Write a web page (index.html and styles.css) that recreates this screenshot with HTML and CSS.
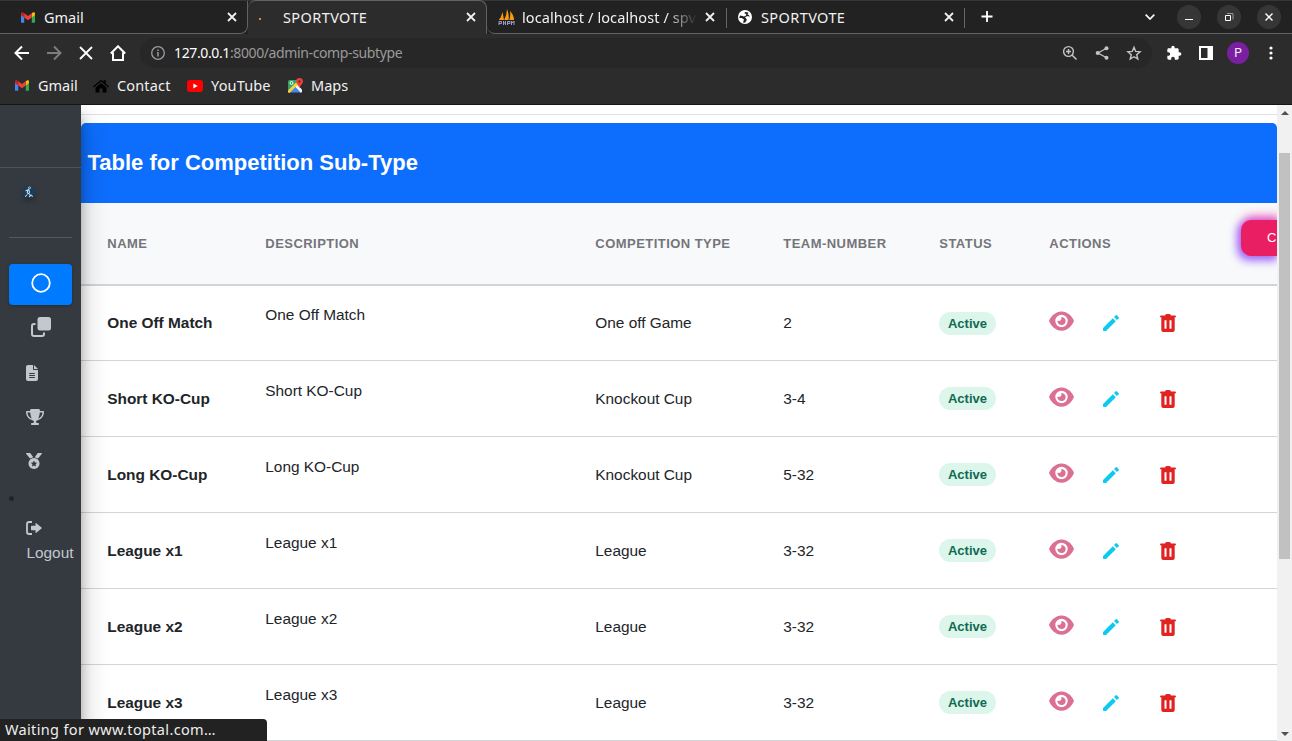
FILE: index.html
```html
<!DOCTYPE html>
<html lang="en">
<head>
<meta charset="utf-8">
<title>SPORTVOTE</title>
<link rel="stylesheet" href="styles.css">
</head>
<body>
<svg class="defs" aria-hidden="true">
  <symbol id="gmail" viewBox="0 0 16 12"><path fill="#4285f4" d="M0 2v9q0 1 1 1h2.700V5z"/><path fill="#34a853" d="M12.300 5v7H15q1 0 1-1V2z"/><path fill="#fbbc04" d="M12.300 1.200V6L16 3.200V1.700C16 0 14.400 -.4 13.200 .5z"/><path fill="#c5221f" d="M0 1.700v1.500L3.700 6V1.200L2.800.5C1.600-.4 0 0 0 1.700z"/><path fill="#ea4335" d="M3.700 6V1.200L8 4.400l4.300-3.200V6L8 9.200z"/></symbol>
  <symbol id="close" viewBox="0 0 10 10"><path d="M1 1l8 8M9 1l-8 8" stroke="currentColor" stroke-width="1.800" fill="none"/></symbol>
  <symbol id="eye" viewBox="0 0 576 512"><path fill="currentColor" d="M288 32c-80.800 0-145.500 36.800-192.600 80.600C48.600 156 17.300 208 2.500 243.700c-3.300 7.900-3.300 16.700 0 24.600C17.300 304 48.600 356 95.400 399.400C142.500 443.200 207.200 480 288 480s145.500-36.800 192.600-80.600c46.800-43.500 78.100-95.400 93-131.100c3.300-7.900 3.300-16.700 0-24.600c-14.900-35.700-46.200-87.700-93-131.100C433.500 68.800 368.800 32 288 32zM144 256a144 144 0 1 1 288 0 144 144 0 1 1 -288 0zm144-64c0 35.300-28.700 64-64 64c-7.100 0-13.900-1.200-20.300-3.300c-5.500-1.800-11.900 1.600-11.700 7.400c.3 6.900 1.300 13.800 3.200 20.700c13.700 51.200 66.400 81.600 117.600 67.900s81.600-66.400 67.900-117.600c-11.100-41.500-47.800-69.400-88.600-71.100c-5.800-.2-9.200 6.100-7.400 11.700c2.100 6.400 3.300 13.200 3.300 20.300z"/></symbol>
  <symbol id="pencil" viewBox="0 0 16 16"><path fill="currentColor" d="M9.800 3.200l3 3-9.300 9.300q-.5.500-1.200.5H.7q-.7 0-.7-.7v-1.600q0-.7.500-1.200zM11 2l1.500-1.500q.8-.8 1.600 0l1.400 1.400q.8.800 0 1.600L14 5z"/></symbol>
  <symbol id="trash" viewBox="0 0 16 18"><path fill="currentColor" fill-rule="evenodd" d="M5 1.500Q5.200 0 6.500 0h3Q10.800 0 11 1.500h4q1 0 1 .9t-1 .9h-.3V16q0 2-2 2H3.300q-2 0-2-2V3.300H1q-1 0-1-.9t1-.9zM4.500 6.300v8.400h2V6.300zm5 0v8.400h2V6.300z"/></symbol>
</svg>

<div class="browser">
  <header class="tabs">
    <div class="tab tab-gmail"><svg class="gicon"><use href="#gmail"/></svg><span>Gmail</span><svg class="x"><use href="#close"/></svg></div>
    <div class="tab tab-active"><i class="spinner"></i><span>SPORTVOTE</span><svg class="x"><use href="#close"/></svg></div>
    <div class="tab tab-db">
      <svg class="sail" viewBox="0 0 17 17"><path fill="#f89c0e" d="M4.500 3L6 11H.8Q3.500 8 4.500 3zM9 0q2.500 6 1.500 11H6.200Q8.800 6 9 0zM12 2q4 4 4 9h-4.600Q12.800 6 12 2z"/><path d="M1 16v-3.500h2.500v2H1M5.500 12v4M5.500 14h2M7.500 12v4M9.500 16v-3.500h2.500v2H9.500M13.500 16v-4l1.200 2 1.300-2v4" stroke="#9a9cc8" fill="none"/></svg>
      <span class="fade">localhost / localhost / spv</span><svg class="x"><use href="#close"/></svg></div>
    <div class="tab tab-last">
      <svg class="globe" viewBox="0 0 14 14"><circle cx="7" cy="7" r="7" fill="#fff"/><path fill="#222" d="M7 2l-.5 1.500 1.800.5L8 5.500 6 6.500 4.300 6 2 5.500 1.200 8l2.500 0 2.300 1.500L5 12.600l2 .1 2-3 .5-2 2-.7L11 5l-1.500-.5L10.500 2.500Z"/><path fill="#fff" d="M7 7l3-1 2.500 1.500-1 2-2.500.5z"/></svg>
      <span>SPORTVOTE</span><svg class="x"><use href="#close"/></svg></div>
    <svg class="plus" viewBox="0 0 12 12"><path d="M6 0v12M0 6h12" stroke="#fff" stroke-width="2"/></svg>
    <div class="window-tools">
      <svg class="chev" viewBox="0 0 10 6"><path d="M.7.7L5 5 9.300.7" stroke="#fff" stroke-width="1.700" fill="none"/></svg>
      <b><svg viewBox="0 0 10 10"><path d="M1 7.500h8" stroke="#fff"/></svg></b>
      <b><svg viewBox="0 0 10 10"><path d="M3 1.500h6v6" stroke="#999" fill="none"/><path d="M1.500 3.500h5v5h-5z" stroke="#fff" fill="none"/></svg></b>
      <b><svg viewBox="0 0 10 10"><path d="M1.500 1.500l7 7M8.500 1.500l-7 7" stroke="#fff" stroke-width="1.400"/></svg></b>
    </div>
  </header>

  <nav class="toolbar">
    <svg class="nav" viewBox="0 0 16 16"><path d="M15 8H2M8 1.500L1.500 8 8 14.500" stroke="#fff" stroke-width="2" fill="none"/></svg>
    <svg class="nav" viewBox="0 0 16 16"><path d="M1 8h13M8 1.500L14.500 8 8 14.500" stroke="#7d7d7d" stroke-width="2" fill="none"/></svg>
    <svg class="nav" viewBox="0 0 16 16"><path d="M2 2l12 12M14 2L2 14" stroke="#fff" stroke-width="1.800"/></svg>
    <svg class="nav" viewBox="0 0 16 16"><path d="M.8 8.500L8 1.300l7.200 7.200M3 7.500V15h10V7.500" stroke="#fff" stroke-width="2" fill="none"/></svg>
    <div class="omnibox">
      <svg class="info" viewBox="0 0 14 14"><circle cx="7" cy="7" r="6.300" stroke="#9a9da1" stroke-width="1.300" fill="none"/><path d="M7 6v4.500M7 3.500V5" stroke="#9a9da1" stroke-width="1.500"/></svg>
      <p class="url"><em>127.0.0.1</em>:8000/admin-comp-subtype</p>
      <svg class="act" viewBox="0 0 16 16"><circle cx="6.500" cy="6.500" r="4.900" stroke="#c4c4c4" stroke-width="1.400" fill="none"/><path d="M10 10l4.500 4.500M6.500 4v5M4 6.500h5" stroke="#c4c4c4" stroke-width="1.500"/></svg>
      <svg class="act" viewBox="0 0 16 16"><path d="M12.500 3.300L4 8l8.500 4.700" stroke="#c4c4c4" stroke-width="1.300" fill="none"/><g fill="#c4c4c4"><circle cx="12.500" cy="3.300" r="2"/><circle cx="3.700" cy="8" r="2"/><circle cx="12.500" cy="12.700" r="2"/></g></svg>
      <svg class="act" viewBox="0 0 16 16"><path d="M8 2.300l1.700 4.100 4.400.4-3.400 2.900 1.100 4.300L8 11.700 4.200 14l1.100-4.300-3.400-2.900 4.400-.4z" stroke="#c4c4c4" stroke-width="1.400" fill="none"/></svg>
    </div>
    <svg class="tool" viewBox="0 0 24 24"><path fill="#fff" d="M20.500 11H19V7c0-1.100-.9-2-2-2h-4V3.500C13 2.120 11.880 1 10.500 1S8 2.120 8 3.500V5H4c-1.100 0-1.990.9-1.990 2v3.800H3.500c1.490 0 2.700 1.210 2.700 2.700s-1.210 2.700-2.700 2.700H2V20c0 1.100.9 2 2 2h3.800v-1.500c0-1.490 1.210-2.700 2.700-2.700 1.490 0 2.700 1.210 2.700 2.700V22H17c1.100 0 2-.9 2-2v-4h1.500c1.380 0 2.500-1.120 2.500-2.500S21.880 11 20.500 11z"/></svg>
    <svg class="tool" viewBox="0 0 16 16"><path fill="#fff" fill-rule="evenodd" d="M1 1h14v14H1zM3 3v10h6.500V3z"/></svg>
    <span class="avatar">P</span>
    <svg class="dots" viewBox="0 0 4 14"><circle cx="2" cy="2" r="1.600" fill="#fff"/><circle cx="2" cy="7" r="1.600" fill="#fff"/><circle cx="2" cy="12" r="1.600" fill="#fff"/></svg>
  </nav>

  <nav class="bookmarks">
    <a class="bm bm-gmail"><svg class="gicon"><use href="#gmail"/></svg><span>Gmail</span></a>
    <a class="bm bm-contact"><svg viewBox="0 0 16 14"><path d="M0 7.500L8 .8l2.500 2V1.200h2.300v3.600L16 7.500l-.8 1L8 2.600.8 8.500zM2.500 8.500L8 4l5.500 4.500V13.500H9.500v-4h-3v4h-4z"/></svg><span>Contact</span></a>
    <a class="bm bm-youtube"><svg viewBox="0 0 16 12"><rect width="16" height="12" rx="3" fill="red"/><path d="M6.300 3.500v5L10.700 6z" fill="#fff"/></svg><span>YouTube</span></a>
    <a class="bm bm-maps"><svg viewBox="0 0 15 15"><path fill="#34a063" d="M1.500 2H13v5L6 14H1.500Q0 14 0 12.500v-9Q0 2 1.500 2z"/><path fill="#4285f4" d="M1 14.500L7 8.500l6 6z"/><path fill="#f5f5f5" d="M7 8.500l2-2 5 5v2L13 15z"/><path fill="#fdd13a" d="M0 12.500L9.500 3l2 2L1.500 15Q0 15 0 13.500z"/><circle cx="3.500" cy="5" r="1.500" fill="none" stroke="#fff"/><path fill="#e94335" d="M11.500 0Q15 .3 15 3.500c0 2.500-2.700 3.500-3.500 6.500C10.700 7 8 6 8 3.500Q8 .3 11.500 0z"/><circle cx="11.500" cy="3.500" r="1.200" fill="#812a23"/></svg><span>Maps</span></a>
  </nav>
</div>

<div class="page">
  <aside class="sidebar">
    <div class="brand-space"></div>
    <div class="user">
      <svg viewBox="0 0 12 12"><circle cx="6" cy="6" r="6" fill="#123f63"/><circle cx="6.500" cy="1.800" r="1" fill="none" stroke="#d7e2ec" stroke-width=".8"/><path d="M2.500 4.800l3.300-1.300.7 3-2 1.700M5 4L4.200 7l2.600 1 .4 2M2 10.700l2.200-2M6 11l2.500-2 1 1.800" fill="none" stroke="#e7eef4"/></svg>
    </div>
    <a class="side-active"><svg viewBox="0 0 20 20"><circle cx="10" cy="10" r="8.800" fill="none" stroke="#fff" stroke-width="1.800"/></svg></a>
    <svg class="s-copy" viewBox="0 0 20 20"><rect x="6.500" width="13.500" height="13.500" rx="2.500" fill="currentColor"/><path d="M4.500 7H3Q1 7 1 9v8q0 2 2 2h8q2 0 2-2v-1.500" fill="none" stroke="currentColor" stroke-width="2"/></svg>
    <svg class="s-file" viewBox="0 0 384 512"><path fill="currentColor" d="M64 0C28.700 0 0 28.700 0 64V448c0 35.300 28.700 64 64 64H320c35.300 0 64-28.700 64-64V160H256c-17.700 0-32-14.300-32-32V0H64zM256 0V128H384L256 0zM112 256H272c8.800 0 16 7.200 16 16s-7.200 16-16 16H112c-8.800 0-16-7.200-16-16s7.200-16 16-16zm0 64H272c8.800 0 16 7.200 16 16s-7.200 16-16 16H112c-8.800 0-16-7.200-16-16s7.200-16 16-16zm0 64H272c8.800 0 16 7.200 16 16s-7.200 16-16 16H112c-8.800 0-16-7.200-16-16s7.200-16 16-16z"/></svg>
    <svg class="s-trophy" viewBox="0 0 576 512"><path fill="currentColor" d="M400 0H176c-26.500 0-48.100 21.800-47.100 48.200c.2 5.300 .4 10.600 .7 15.800H24C10.700 64 0 74.700 0 88c0 92.600 33.500 157 78.500 200.700c44.300 43.100 98.300 64.800 138.100 75.800c23.400 6.500 39.400 26 39.400 45.600c0 20.900-17 37.900-37.900 37.900H192c-17.700 0-32 14.300-32 32s14.300 32 32 32H384c17.700 0 32-14.300 32-32s-14.300-32-32-32H357.900C337 448 320 431 320 410.100c0-19.600 15.900-39.200 39.400-45.600c39.900-11 93.900-32.700 138.200-75.800C542.500 245 576 180.600 576 88c0-13.300-10.700-24-24-24H446.400c.3-5.200 .5-10.400 .7-15.800C448.100 21.800 426.500 0 400 0zM48.900 112h84.400c9.100 90.100 29.200 150.300 51.900 190.600c-24.900-11-50.800-26.500-73.200-48.300c-32-31.100-58-76-63-142.300zM464.100 254.300c-22.400 21.800-48.300 37.300-73.200 48.300c22.700-40.300 42.800-100.500 51.900-190.600h84.400c-5.100 66.300-31.100 111.200-63 142.300z"/></svg>
    <svg class="s-medal" viewBox="0 0 16 16"><path fill="currentColor" d="M.5 0h3.700L7.300 4.200 4 5.500.1.800Q-.2 0 .5 0zM15.500 0h-3.700L8.700 4.200 12 5.500 15.900.8Q16.200 0 15.500 0z"/><path fill="currentColor" fill-rule="evenodd" d="M8 5a5.500 5.500 0 1 0 .01 0zM8 7.500l1 2 2.200.3-1.600 1.500.4 2.200-2-1-2 1 .4-2.200-1.600-1.500L7 9.500z"/></svg>
    <i class="bullet"></i>
    <svg class="s-logout" viewBox="0 0 16 14"><path d="M6 1H3Q1 1 1 3v8q0 2 2 2h3" fill="none" stroke="currentColor" stroke-width="1.800"/><path fill="currentColor" d="M5 5.500q0-.7.7-.7H9.500V2.700q0-1 .8-.4l5.200 4.200q.6.500 0 1l-5.200 4.200q-.8.600-.8-.4V9.200H5.700q-.7 0-.7-.7z"/></svg>
    <span class="logout">Logout</span>
  </aside>

  <main class="content">
    <div class="topline"></div>
    <h1>Table for Competition Sub-Type</h1>
    <div class="row head"><span>NAME</span><span>DESCRIPTION</span><span>COMPETITION TYPE</span><span>TEAM-NUMBER</span><span>STATUS</span><span>ACTIONS</span><button>C</button></div>
    <div class="row first"><strong>One Off Match</strong><span class="desc">One Off Match</span><span>One off Game</span><span>2</span><span class="pill">Active</span><span class="actions"><svg class="eye"><use href="#eye"/></svg><svg class="pencil"><use href="#pencil"/></svg><svg class="trash"><use href="#trash"/></svg></span></div>
    <div class="row"><strong>Short KO-Cup</strong><span class="desc">Short KO-Cup</span><span>Knockout Cup</span><span>3-4</span><span class="pill">Active</span><span class="actions"><svg class="eye"><use href="#eye"/></svg><svg class="pencil"><use href="#pencil"/></svg><svg class="trash"><use href="#trash"/></svg></span></div>
    <div class="row"><strong>Long KO-Cup</strong><span class="desc">Long KO-Cup</span><span>Knockout Cup</span><span>5-32</span><span class="pill">Active</span><span class="actions"><svg class="eye"><use href="#eye"/></svg><svg class="pencil"><use href="#pencil"/></svg><svg class="trash"><use href="#trash"/></svg></span></div>
    <div class="row"><strong>League x1</strong><span class="desc">League x1</span><span>League</span><span>3-32</span><span class="pill">Active</span><span class="actions"><svg class="eye"><use href="#eye"/></svg><svg class="pencil"><use href="#pencil"/></svg><svg class="trash"><use href="#trash"/></svg></span></div>
    <div class="row"><strong>League x2</strong><span class="desc">League x2</span><span>League</span><span>3-32</span><span class="pill">Active</span><span class="actions"><svg class="eye"><use href="#eye"/></svg><svg class="pencil"><use href="#pencil"/></svg><svg class="trash"><use href="#trash"/></svg></span></div>
    <div class="row"><strong>League x3</strong><span class="desc">League x3</span><span>League</span><span>3-32</span><span class="pill">Active</span><span class="actions"><svg class="eye"><use href="#eye"/></svg><svg class="pencil"><use href="#pencil"/></svg><svg class="trash"><use href="#trash"/></svg></span></div>
  </main>
  <div class="scrollbar">
    <svg viewBox="0 0 8 4"><path d="M0 4l4-4 4 4z" fill="#505050"/></svg>
    <i class="thumb"></i>
    <svg viewBox="0 0 8 4"><path d="M0 0l4 4 4-4z" fill="#505050"/></svg>
  </div>
</div>
<div class="status">Waiting for www.toptal.com…</div>
</body>
</html>
```
FILE: styles.css
```css
* { box-sizing: border-box; }
body { margin: 0; width: 1292px; height: 741px; overflow: hidden; display: flex; flex-direction: column; background: #fff; font-family: "Liberation Sans", Arial, sans-serif; }
svg { display: block; flex: none; }
.defs { position: absolute; width: 0; height: 0; }

/* Browser chrome */
.browser { height: 105px; flex: none; background: #2c2c2c; border-bottom: 1px solid #151515; color: #f1f1f1; font-family: "Noto Sans", sans-serif; font-size: 14.5px; }
.tabs { height: 34px; display: flex; background: #222; border-top: 1px solid #363636; }
.tab { display: flex; align-items: center; height: 33px; border-bottom: 1px solid #626262; white-space: nowrap; }
.tab span { line-height: 20px; padding-bottom: 1px; }
.tab .x { width: 10px; height: 10px; margin-left: auto; }
.gicon { width: 14px; height: 11px; }
.tab-gmail { width: 248px; padding: 0 10px 0 21px; gap: 9px; border-right: 1px solid #626262; border-bottom-right-radius: 8px; }
.tab-active { width: 239px; padding: 0 10px 0 11px; background: #2c2c2c; border-top: 1px solid #626262; border-bottom-color: #2c2c2c; border-right: 1px solid #626262; border-top-left-radius: 8px; border-top-right-radius: 8px; margin-top: -1px; height: 34px; letter-spacing: .4px; }
.tab-active span { margin-left: 22px; }
.spinner { width: 2px; height: 2px; background: #f58220; margin-top: 3px; }
.tab-db { width: 239px; padding: 0 11px 0 11px; border-bottom-left-radius: 8px; letter-spacing: .1px; }
.sail { width: 17px; height: 17px; margin-right: 7px; }
.fade { width: 175px; overflow: hidden; mask-image: linear-gradient(90deg, #000 82%, transparent 100%); }
.tab-last { width: 239px; padding: 0 11px 0 12px; gap: 9px; letter-spacing: .4px; background: linear-gradient(#666, #666) 0 7px / 1px 20px no-repeat, linear-gradient(#666, #666) 100% 7px / 1px 20px no-repeat; }
.globe { width: 14px; height: 14px; }
.plus { width: 48px; height: 33px; padding: 10px 20px 11px 16px; border-bottom: 1px solid #626262; }
.window-tools { flex: 1; display: flex; align-items: center; justify-content: flex-end; padding-right: 11px; border-bottom: 1px solid #626262; }
.chev { width: 10px; height: 6px; margin-right: 22px; }
.window-tools b { width: 24px; height: 24px; border-radius: 50%; background: #363636; margin-left: 16px; display: grid; place-items: center; }
.window-tools .chev + b { margin-left: 0; }
.window-tools b svg { width: 10px; height: 10px; }
.toolbar { height: 38px; display: flex; align-items: center; padding: 0 19px 0 14px; }
.nav { width: 16px; height: 16px; margin-right: 16px; }
.omnibox { width: 1012px; height: 30px; border-radius: 15px; background: #272727; display: flex; align-items: center; padding: 0 10px 0 11px; margin-left: -2px; margin-right: 14px; }
.info { width: 14px; height: 14px; margin-right: 9px; }
.url { margin: 0 auto 0 0; color: #9a9a9a; font-size: 14px; letter-spacing: -.38px; line-height: 20px; white-space: nowrap; }
.url em { font-style: normal; color: #fff; }
.act { width: 16px; height: 16px; margin-left: 16px; }
.tool { width: 16px; height: 16px; margin-right: 16px; }
.avatar { width: 22px; height: 22px; border-radius: 50%; background: #7b1fa2; font: 12px/22px Roboto, sans-serif; text-align: center; }
.toolbar .tool + .avatar { margin: 0 20px 0 -3px; }
.dots { width: 4px; height: 14px; }
.bookmarks { height: 27px; display: flex; padding-left: 15px; }
.bm { display: flex; align-items: center; }
.bm span { line-height: 20px; padding-bottom: 1px; }
.bm svg { margin-right: 9px; }
.bm-gmail { width: 78px; }
.bm-contact { width: 94px; letter-spacing: .15px; }
.bm-contact svg { width: 16px; height: 14px; margin-right: 8px; }
.bm-youtube { width: 101px; letter-spacing: .15px; }
.bm-youtube svg { width: 16px; height: 12px; margin-right: 8px; }
.bm-maps svg { width: 15px; height: 15px; margin-right: 8px; }

/* Application */
.page { flex: 1; min-height: 0; display: flex; overflow: hidden; }
.sidebar { width: 81px; flex: none; background: #343a40; color: #c2c7d0; position: relative; z-index: 2; display: flex; flex-direction: column; box-shadow: 0 14px 28px rgba(0,0,0,.25), 0 10px 10px rgba(0,0,0,.22); }
.brand-space { height: 63px; border-bottom: 1px solid #4b545c; flex: none; }
.user { height: 70px; margin: 0 9px; padding: 18px 14px; border-bottom: 1px solid #4f5962; flex: none; }
.user svg { width: 12px; height: 12px; border-radius: 50%; box-shadow: 0 3px 6px rgba(0,0,0,.3); }
.side-active { height: 41px; margin: 26px 9px 0; padding: 9px 0 0 22.400px; background: #007bff; border-radius: 4px; box-shadow: 0 1px 3px rgba(0,0,0,.25); flex: none; }
.side-active svg { width: 20px; height: 20px; }
.s-copy { width: 20px; height: 20px; margin: 12px 0 0 31.400px; }
.s-file { width: 12px; height: 16px; margin: 28px 0 0 26.400px; }
.s-trophy { width: 18px; height: 16px; margin: 28px 0 0 26.400px; }
.s-medal { width: 16px; height: 16px; margin: 28px 0 0 26.400px; }
.bullet { width: 5px; height: 5px; border-radius: 50%; background: #212529; margin: 27px 0 0 9px; flex: none; }
.s-logout { width: 16px; height: 14px; margin: 20px 0 0 26.400px; }
.logout { margin: 8px 0 0 26.400px; font-size: 15.400px; line-height: 20px; }

.content { width: 1196px; flex: none; overflow: hidden; color: #212529; font-size: 15.400px; }
.topline { height: 18px; border-bottom: 8px solid #fff; background: linear-gradient(#dee2e6, #dee2e6) 0 9px / 100% 1px no-repeat; }
h1 { margin: 0; height: 80px; line-height: 79px; padding-left: 6.500px; font-size: 22px; color: #fff; background: #0d6efd; border-radius: 5px 5px 0 0; white-space: nowrap; }
.row { height: 76px; display: grid; grid-template-columns: 158px 330px 188px 156px 110px 190px 120px; align-items: center; padding-left: 26px; border-bottom: 1px solid #d2d4d6; white-space: nowrap; }
.row > span:not(.pill):not(.actions), .row > strong { padding-left: .3px; }
.row.first { height: 75px; }
.row.head { height: 83px; background: #f8f9fb; border-bottom: 2px solid #d2d4d7; color: #747579; font-size: 13px; font-weight: 700; letter-spacing: .46px; }
.head button { width: 36px; height: 36px; margin: -12px 0 0 2px; padding: 0 0 0 26px; overflow: visible; border: 0; border-radius: 10px 0 0 10px; background: #e91e63; color: #fff; font: 13px "Liberation Sans", sans-serif; text-align: left; box-shadow: -2px 3px 8px 2px rgba(125,65,255,.7), 2px -3px 10px 1px rgba(255,30,150,.65); }
.desc { margin-top: -16px; }
.pill { width: 57px; height: 23px; border-radius: 12px; background: #ddf6eb; color: #0f6a50; font-size: 13px; font-weight: 700; line-height: 23px; text-align: center; }
.actions { display: flex; align-items: center; }
.eye { width: 25px; height: 22px; color: #db7093; margin: -4px 29px 0 0; }
.pencil { width: 16px; height: 16px; color: #0dcaf0; margin-right: 41px; }
.trash { width: 16px; height: 18px; color: #e02424; }
.scrollbar { width: 15px; background: #f1f1f1; display: flex; flex-direction: column; align-items: center; padding: 6px 0 5px; position: relative; z-index: 1; }
.scrollbar svg { width: 8px; height: 4px; }
.thumb { width: 11px; height: 406px; background: #c1c1c1; margin: 38px 0 auto; }
.status { position: absolute; left: 0; top: 719px; width: 267px; height: 22px; z-index: 5; padding-left: 5px; border-radius: 0 4px 0 0; background: #222; color: #eee; font: 14.500px/21px "Noto Sans", sans-serif; letter-spacing: .35px; white-space: nowrap; }
```
